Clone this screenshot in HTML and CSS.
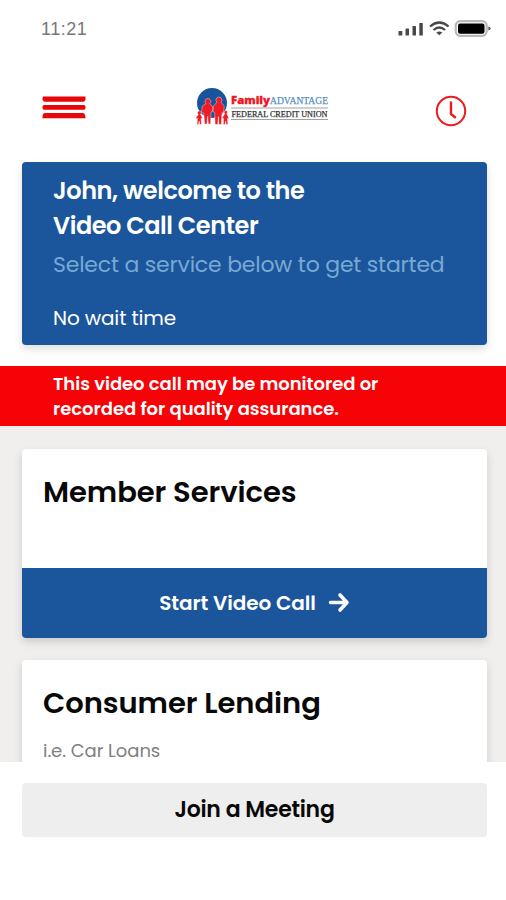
FILE: index.html
```html
<!DOCTYPE html>
<html lang="en">
<head>
<meta charset="utf-8">
<meta name="viewport" content="width=device-width, initial-scale=1">
<title>Video Call Center</title>
<link rel="stylesheet" href="styles.css">
</head>
<body>
<div class="app">
  <div class="status">
    <span class="time">11:21</span>
    <svg class="status-icons" viewBox="0 0 94 18" width="94" height="18">
      <g fill="#484848">
        <rect x="1.500" y="12" width="3.800" height="4.500" rx=".6"/>
        <rect x="8.500" y="9.500" width="3.500" height="7" rx=".6"/>
        <rect x="15.500" y="7" width="3.500" height="9.500" rx=".6"/>
        <rect x="22.300" y="4" width="3.500" height="12.500" rx=".6"/>
      </g>
      <g fill="none" stroke="#484848" stroke-width="2.200">
        <path d="M33 7.500Q42.300 -.500 51.600 7.500"/>
        <path d="M36.500 11Q42.300 6 48.100 11"/>
      </g>
      <path d="M39.300 13.500Q42.300 11.300 45.300 13.500L42.300 16.200Z" fill="#484848"/>
      <rect x="58.700" y="2.200" width="31" height="14.600" rx="4.500" fill="#fff" stroke="#b9b9b9" stroke-width="2.200"/>
      <rect x="61" y="4.500" width="26.500" height="10.300" rx="2" fill="#000"/>
      <path d="M91.400 7.500v4q2.200-.5 2.200-2t-2.200-2Z" fill="#555"/>
    </svg>
  </div>
  <header class="top">
    <svg class="menu" viewBox="0 0 44 24" width="44" height="24" fill="#e90609">
      <path d="M1 .500H43.500V3.500Q43 5.800 41 5.800H3Q1 5.800 .500 3.500V2Z"/>
      <rect x=".5" y="9" width="43" height="4.800" rx="1.800"/>
      <path d="M3 17H41Q43.500 17.500 43.500 22.300H.5V20Q1 17 3 17Z"/>
    </svg>
    <svg class="logo" viewBox="0 0 136 42" width="136" height="42">
      <circle cx="17" cy="17" r="15" fill="#17549b"/>
      <g fill="#ef1c27" stroke="#fff" stroke-width=".4">
        <path d="M13 12.500a2.800 2.800 0 0 1 1.800 5l3 3.500-.3 4.500-1.500.5-.4 12h-2.300l-.6-8-.7 8H9.600l-.8-11-2.300-.5.8-6.500L11 17.500a2.800 2.800 0 0 1 2-5Z"/>
        <path d="M24 11a3 3 0 0 1 2 5.200l3.300 4-.8 6-1.500.3-.6 12H24l-.6-8-.7 8h-2.500l-.6-12-1.500-.8.3-5.500 3.500-4A3 3 0 0 1 24 11Z"/>
        <path d="M4.500 25a1.800 1.800 0 0 1 1 3.200L7.500 32 6 32.500 6.500 38.500H4.800L4.200 35 3.500 38.500H2L2.500 32.500 .5 32.500 3.300 28.300A1.800 1.800 0 0 1 4.500 25Z"/>
        <path d="M30.800 24.500a1.800 1.800 0 0 1 1 3.200L34 32.500 32.400 32.500 33 38.500H31.300L30.600 35 30 38.500H28.300L28.600 32.500 27 32 29.800 27.700A1.800 1.800 0 0 1 30.800 24.500Z"/>
      </g>
      <text class="logo-family" x="36" y="18" textLength="39" lengthAdjust="spacingAndGlyphs">Family</text>
      <text class="logo-adv" x="75" y="18" textLength="58" lengthAdjust="spacingAndGlyphs">ADVANTAGE</text>
      <path d="M36 22H133M36 33.500H133" stroke="#888" stroke-width=".8"/>
      <text class="logo-fcu" x="36.500" y="31" textLength="96" lengthAdjust="spacingAndGlyphs">FEDERAL CREDIT UNION</text>
    </svg>
    <svg class="clock" viewBox="0 0 32 32" width="32" height="32" fill="none" stroke="#ec1b20" stroke-width="2">
      <circle cx="16" cy="16" r="14.200"/>
      <path d="M16 7.500V19L20 22.300" stroke-width="2.400" stroke-linecap="round" stroke-linejoin="round"/>
    </svg>
  </header>
  <section class="welcome">
    <h1>John, welcome to the<br>Video Call Center</h1>
    <p class="sub">Select a service below to get started</p>
    <p class="wait">No wait time</p>
  </section>
  <div class="notice">This video call may be monitored or<br>recorded for quality assurance.</div>
  <main class="list">
    <article class="card">
      <div class="card-body"><h2>Member Services</h2></div>
      <button class="start">Start Video Call
        <svg viewBox="0 0 22 22" width="22" height="22" fill="none" stroke="#fff" stroke-width="3.600" stroke-linecap="round" stroke-linejoin="round"><path d="M2.500 10.500H19M12 3L19 10.500L12 18"/></svg>
      </button>
    </article>
    <article class="card">
      <div class="card-body"><h2>Consumer Lending</h2><p>i.e. Car Loans</p></div>
    </article>
  </main>
  <footer class="bottom"><button class="join">Join a Meeting</button></footer>
</div>
</body>
</html>
```
FILE: styles.css
```css
* { box-sizing: border-box; }
body { margin: 0; background: #fff; font-family: Poppins, Inter, "Liberation Sans", sans-serif; }
h1, h2, p { margin: 0; }
button { border: 0; padding: 0; font: inherit; }
.app { height: 900px; display: flex; flex-direction: column; overflow: hidden; }
.status { flex: none; height: 60px; padding: 19px 15px 0 41px; display: flex; justify-content: space-between; align-items: flex-start; }
.time { font: 18px/20px "Liberation Sans", sans-serif; color: #777; letter-spacing: .5px; }
.top { flex: none; height: 102px; padding: 26px 39px 0 42px; display: flex; justify-content: space-between; align-items: flex-start; }
.menu { margin-top: 10px; }
.logo { margin-left: 4px; }
.clock { margin-top: 9px; }
.logo-family { font: 900 11px "Open Sans", sans-serif; font-weight: 800; fill: #ee1722; stroke: #ee1722; stroke-width: .3px; }
.logo-adv { font: 10.500px "Liberation Serif", serif; fill: #5a8fbd; stroke: #5a8fbd; stroke-width: .25px; }
.logo-fcu { font: 8.500px "Liberation Serif", serif; fill: #333; stroke: #333; stroke-width: .25px; }
.welcome { flex: none; height: 183px; margin: 0 19px 21px 22px; padding: 11px 0 0 31px; border-radius: 4px; background: #1b559b; color: #fff; box-shadow: 0 4px 9px rgba(0,0,0,.13); white-space: nowrap; }
h1 { font-size: 24px; line-height: 35px; font-weight: 600; letter-spacing: -.43px; }
.sub { font-size: 22px; line-height: 32px; margin-top: 6px; color: #78a9d5; letter-spacing: -.2px; }
.wait { font-size: 20px; line-height: 30px; margin-top: 22px; letter-spacing: -.15px; }
.notice { flex: none; height: 60px; padding: 5px 0 0 53px; background: #f50307; color: #fff; font-size: 18px; line-height: 25px; font-weight: 600; letter-spacing: -.04px; }
.list { flex: none; height: 336px; padding: 23px 19px 0 22px; background: #f1eeee; overflow: hidden; }
.card { border-radius: 4px; background: #fff; box-shadow: 0 4px 9px rgba(0,0,0,.15); overflow: hidden; margin-bottom: 22px; }
.card-body { height: 119px; padding: 21px 21px 0; }
h2 { font-size: 29px; line-height: 44px; font-weight: 600; color: #080808; letter-spacing: -.06px; }
.card-body p { font-size: 18px; line-height: 20px; color: #808080; margin-top: 16px; letter-spacing: -.05px; }
.start { display: flex; width: 100%; height: 70px; align-items: center; justify-content: center; gap: 12px; background: #1b559b; color: #fff; font-size: 20px; font-weight: 600; letter-spacing: -.05px; }
.bottom { padding: 21px 19px 0 22px; }
.join { display: block; width: 100%; height: 54px; padding-bottom: 2px; border-radius: 4px; background: #eee; color: #080808; font-size: 22px; font-weight: 600; letter-spacing: -.25px; }
```
